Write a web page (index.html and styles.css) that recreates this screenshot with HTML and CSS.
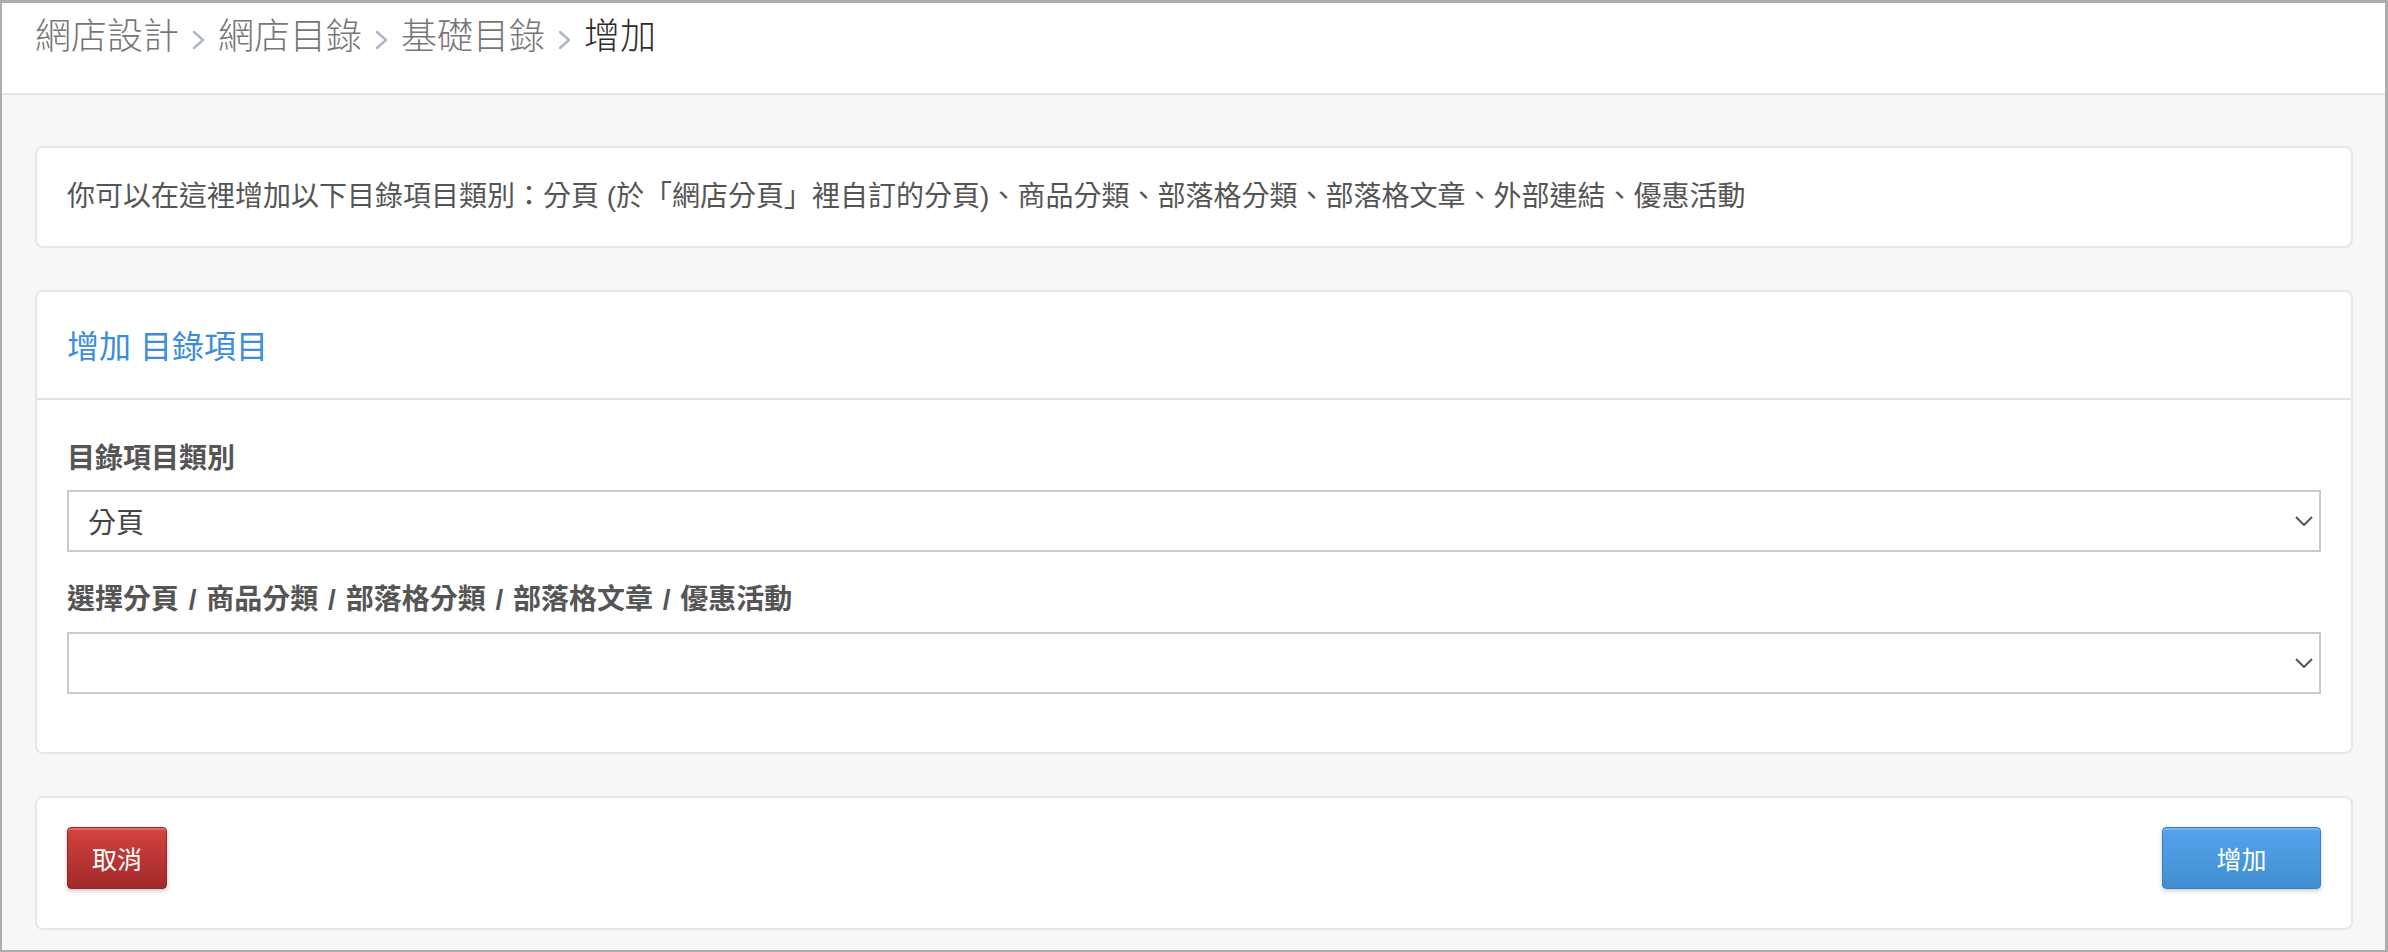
FILE: index.html
```html
<!DOCTYPE html>
<html lang="zh-Hant">
<head>
<meta charset="utf-8">
<title>增加</title>
<link rel="stylesheet" href="styles.css">
</head>
<body>
<div class="frame">
  <header class="topbar">
    <nav class="crumbs">
      <span class="crumb">網店設計</span>
      <svg class="sep" width="39" height="20" viewBox="0 0 39 20"><path d="M15 2 L24 10 L15 18" fill="none" stroke="#aeb6c8" stroke-width="2.4" stroke-linecap="round" stroke-linejoin="round"/></svg>
      <span class="crumb">網店目錄</span>
      <svg class="sep" width="39" height="20" viewBox="0 0 39 20"><path d="M15 2 L24 10 L15 18" fill="none" stroke="#aeb6c8" stroke-width="2.4" stroke-linecap="round" stroke-linejoin="round"/></svg>
      <span class="crumb">基礎目錄</span>
      <svg class="sep" width="39" height="20" viewBox="0 0 39 20"><path d="M15 2 L24 10 L15 18" fill="none" stroke="#aeb6c8" stroke-width="2.4" stroke-linecap="round" stroke-linejoin="round"/></svg>
      <span class="crumb current">增加</span>
    </nav>
  </header>
  <main class="content">
    <section class="card notice">
      <p>你可以在這裡增加以下目錄項目類別：分頁 (於「網店分頁」裡自訂的分頁)、商品分類、部落格分類、部落格文章、外部連結、優惠活動</p>
    </section>
    <section class="card form-card">
      <div class="card-head"><h2>增加 目錄項目</h2></div>
      <div class="card-body">
        <div class="field">
          <label class="field-label">目錄項目類別</label>
          <div class="select">
            <span class="select-value">分頁</span>
            <svg class="caret" width="18" height="10" viewBox="0 0 18 10"><path d="M1 1 L9 9 L17 1" fill="none" stroke="#555" stroke-width="2"/></svg>
          </div>
        </div>
        <div class="field second">
          <label class="field-label">選擇分頁 / 商品分類 / 部落格分類 / 部落格文章 / 優惠活動</label>
          <div class="select">
            <span class="select-value"></span>
            <svg class="caret" width="18" height="10" viewBox="0 0 18 10"><path d="M1 1 L9 9 L17 1" fill="none" stroke="#555" stroke-width="2"/></svg>
          </div>
        </div>
      </div>
    </section>
    <section class="card actions">
      <button class="btn btn-cancel" type="button">取消</button>
      <button class="btn btn-add" type="button">增加</button>
    </section>
  </main>
</div>
</body>
</html>
```
FILE: styles.css
```css
html, body {
  margin: 0;
  padding: 0;
}
body {
  font-family: "Liberation Sans", "Noto Sans CJK TC", sans-serif;
  color: #555;
}
.frame {
  box-sizing: border-box;
  width: 2388px;
  height: 952px;
  border-style: solid;
  border-color: #adadad;
  border-width: 3px 3px 2px 2px;
  background: #f7f7f7;
  display: flex;
  flex-direction: column;
}
.topbar {
  flex: none;
  background: #fff;
  border-bottom: 2px solid #e6e6e6;
  padding: 7px 33px 0;
  box-sizing: content-box;
  height: 83px;
}
.crumbs {
  display: flex;
  align-items: center;
  font-size: 36px;
  line-height: 54px;
  font-weight: 300;
}
.crumb {
  color: #767676;
}
.crumb.current {
  color: #2b2b2b;
}
.sep {
  margin-top: 6px;
  flex: none;
}
.content {
  flex: 1;
  padding: 51px 32px 0 33px;
  display: flex;
  flex-direction: column;
  gap: 42px;
}
.card {
  background: #fff;
  border: 2px solid #e6e6e6;
  border-radius: 8px;
}
.notice {
  padding: 28px 30px;
}
.notice p {
  margin: 0;
  font-size: 28px;
  line-height: 42px;
  color: #555;
}
.card-head {
  padding: 31px 30px 27px;
  border-bottom: 2px solid #e2e2e2;
}
.card-head h2 {
  margin: 0;
  font-size: 32px;
  line-height: 48px;
  font-weight: normal;
  color: #3a8ddd;
}
.card-body {
  padding: 38px 30px 58px;
}
.field {
  display: flex;
  flex-direction: column;
}
.field.second {
  margin-top: 27px;
}
.field-label {
  font-size: 28px;
  line-height: 42px;
  font-weight: bold;
  color: #555;
  margin-bottom: 10px;
  word-spacing: 2px;
}
.field.second .field-label {
  margin-bottom: 11px;
}
.select {
  box-sizing: border-box;
  height: 62px;
  border: 2px solid #cbcbcb;
  background: #fff;
  padding: 0 6px 0 19px;
  display: flex;
  align-items: center;
  justify-content: space-between;
}
.select-value {
  font-size: 28px;
  color: #444;
}
.caret {
  flex: none;
}
.actions {
  padding: 29px 30px 39px;
  display: flex;
  justify-content: space-between;
  align-items: flex-start;
}
.btn {
  box-sizing: border-box;
  height: 62px;
  border-radius: 4px;
  color: #fff;
  font-family: "Liberation Sans", "Noto Sans CJK TC", sans-serif;
  font-size: 25px;
  padding: 0;
  cursor: pointer;
}
.btn-cancel {
  width: 100px;
  background: linear-gradient(#d5433f, #a1292a);
  border: 1px solid #93262a;
  box-shadow: inset 0 2px 0 rgba(255,255,255,0.22), 0 2px 4px rgba(0,0,0,0.22);
}
.btn-add {
  width: 159px;
  background: linear-gradient(#54a4ec, #428dd0);
  border: 1px solid #3b7fc2;
  box-shadow: inset 0 2px 0 rgba(255,255,255,0.2), 0 2px 4px rgba(0,0,0,0.2);
}
```
